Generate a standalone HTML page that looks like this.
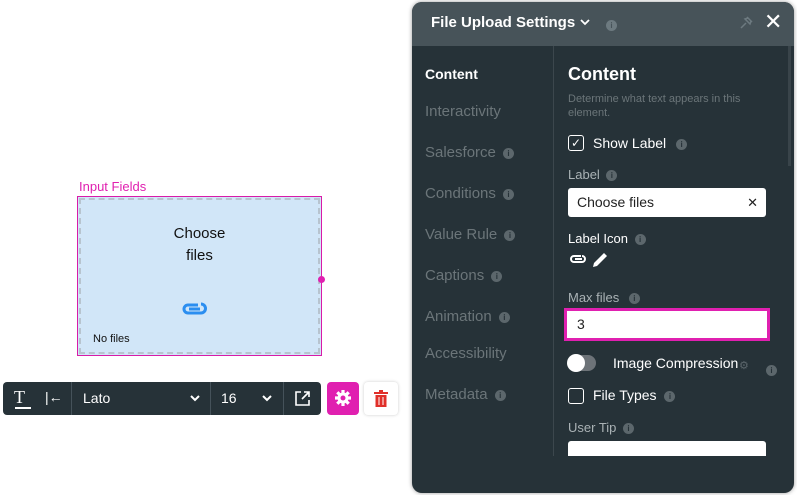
<!DOCTYPE html>
<html><head><meta charset="utf-8"><style>
*{box-sizing:border-box;margin:0;padding:0}
body{width:797px;height:495px;background:#fff;position:relative;overflow:hidden;font-family:"Liberation Sans",sans-serif}
.abs{position:absolute}
.info{display:inline-block;width:11px;height:11px;border-radius:50%;background:#5c676c;color:#263238;font-size:8px;line-height:11px;text-align:center;font-weight:bold;vertical-align:middle;margin-left:3px}
.nav{position:absolute;left:425px;color:#6b7579;font-size:15px}
.lbl{position:absolute;left:568px;color:#aab2b5;font-size:13px}
</style></head><body>
<div class="abs" style="left:79px;top:179px;color:#e020b0;font-size:13px">Input Fields</div>
<div class="abs" style="left:77px;top:196px;width:245px;height:160px;border:1px solid #d81ba8;background:#d1e6f8">
  <div class="abs" style="left:1px;top:1px;right:1px;bottom:1px;border:2px dashed #b7c4cf"></div>
  <div class="abs" style="left:0;right:0;top:26px;text-align:center;font-size:15px;line-height:22px;color:#111">Choose<br>files</div>
  <svg class="abs" style="left:102px;top:102px" width="28" height="20" viewBox="0 0 28 20"><path d="M18 6H8a4 4 0 0 0 0 8h13a4.5 4.5 0 0 0 0-9" fill="none" stroke="#2b8ef0" stroke-width="3"/><path d="M20 10H9" stroke="#2b8ef0" stroke-width="3"/></svg>
  <div class="abs" style="left:15px;top:136px;font-size:11px;color:#111">No files</div>
</div>
<div class="abs" style="left:318px;top:276px;width:7px;height:7px;border-radius:50%;background:#e020b0"></div>
<div class="abs" style="left:3px;top:382px;width:318px;height:33px;background:#263238;border-radius:4px;color:#fff">
  <div class="abs" style="left:11px;top:5px;font-family:'Liberation Serif',serif;font-size:18px">T</div>
  <div class="abs" style="left:12px;top:25px;width:16px;height:2px;background:#fff"></div>
  <div class="abs" style="left:42px;top:7px;font-size:14px">|←</div>
  <div class="abs" style="left:68px;top:0;width:1px;height:33px;background:#45525a"></div>
  <div class="abs" style="left:80px;top:8px;font-size:14px">Lato</div>
  <svg class="abs" style="left:187px;top:13px" width="10" height="7" viewBox="0 0 10 7"><path d="M1 1l4 4 4-4" fill="none" stroke="#fff" stroke-width="2"/></svg>
  <div class="abs" style="left:207px;top:0;width:1px;height:33px;background:#45525a"></div>
  <div class="abs" style="left:218px;top:8px;font-size:14px">16</div>
  <svg class="abs" style="left:259px;top:13px" width="10" height="7" viewBox="0 0 10 7"><path d="M1 1l4 4 4-4" fill="none" stroke="#fff" stroke-width="2"/></svg>
  <div class="abs" style="left:280px;top:0;width:1px;height:33px;background:#45525a"></div>
  <svg class="abs" style="left:292px;top:9px" width="15" height="15" viewBox="0 0 15 15"><path d="M6 1H1v13h13V9M9 1h5v5M14 1L7 8" fill="none" stroke="#fff" stroke-width="1.6"/></svg>
</div>
<div class="abs" style="left:327px;top:382px;width:32px;height:33px;background:#e020b0;border-radius:4px"></div>
<svg class="abs" style="left:334px;top:389px" width="18" height="18" viewBox="0 0 18 18"><g stroke="#fff" stroke-width="3.2"><path d="M9 1v16M1 9h16M3.3 3.3l11.4 11.4M14.7 3.3L3.3 14.7"/></g><circle cx="9" cy="9" r="5.5" fill="#fff"/><circle cx="9" cy="9" r="2.5" fill="#e020b0"/></svg>
<div class="abs" style="left:364px;top:382px;width:34px;height:33px;background:#fff;border-radius:4px;box-shadow:0 0 3px #ccc"></div>
<svg class="abs" style="left:374px;top:390px" width="14" height="17" viewBox="0 0 14 17"><rect x="0" y="2" width="14" height="2" fill="#e0302a"/><rect x="5" y="0" width="4" height="2" fill="#e0302a"/><rect x="1.5" y="5" width="11" height="12" fill="#e0302a"/><path d="M5 7v8M9 7v8" stroke="#fff" stroke-width="1"/></svg>
<div class="abs" style="left:412px;top:2px;width:382px;height:491px;background:#263238;border-radius:10px;overflow:hidden;box-shadow:0 0 4px #999">
  <div class="abs" style="left:0;top:0;width:382px;height:44px;background:#475359"></div>
</div>
<div class="abs" style="left:431px;top:14px;color:#fff;font-size:15px;font-weight:bold">File Upload Settings</div>
<svg class="abs" style="left:580px;top:19px" width="10" height="7" viewBox="0 0 10 7"><path d="M1 1l4 4 4-4" fill="none" stroke="#fff" stroke-width="1.8"/></svg>
<div class="abs" style="left:603px;top:17px"><span class="info" style="background:#6d7a80;color:#475359">i</span></div>
<svg class="abs" style="left:740px;top:15px" width="14" height="14" viewBox="0 0 14 14"><path d="M1 13l5-5M5 4l5 5M7 2l5 5M8 3l-3 1 5 5 1-3" fill="none" stroke="#6d7a80" stroke-width="1.5"/></svg>
<div class="abs" style="left:764px;top:9px;color:#fff;font-size:22px">✕</div>
<div class="abs" style="left:553px;top:46px;width:1px;height:410px;background:#3c474d"></div>
<div class="abs" style="left:788px;top:46px;width:3px;height:120px;background:#39444a"></div>
<div class="nav" style="top:66px;color:#fff;font-weight:bold;font-size:14px">Content</div>
<div class="nav" style="top:103px">Interactivity</div>
<div class="nav" style="top:144px">Salesforce <span class="info">i</span></div>
<div class="nav" style="top:185px">Conditions <span class="info">i</span></div>
<div class="nav" style="top:226px">Value Rule <span class="info">i</span></div>
<div class="nav" style="top:267px">Captions <span class="info">i</span></div>
<div class="nav" style="top:308px">Animation <span class="info">i</span></div>
<div class="nav" style="top:345px">Accessibility</div>
<div class="nav" style="top:386px">Metadata <span class="info">i</span></div>
<div class="abs" style="left:568px;top:64px;color:#fff;font-size:18px;font-weight:bold">Content</div>
<div class="abs" style="left:568px;top:92px;color:#6b7579;font-size:11px;line-height:14px;width:200px">Determine what text appears in this element.</div>
<div class="abs" style="left:568px;top:135px;width:16px;height:16px;border:1px solid #fff;border-radius:3px;color:#fff;font-size:12px;line-height:14px;text-align:center">✓</div>
<div class="abs" style="left:593px;top:135px;color:#fff;font-size:14px">Show Label <span class="info" style="margin-left:6px">i</span></div>
<div class="lbl" style="top:167px">Label <span class="info">i</span></div>
<div class="abs" style="left:568px;top:188px;width:198px;height:29px;background:#fff;border-radius:3px;font-size:14px;line-height:29px;padding-left:9px;color:#222">Choose files<span style="position:absolute;right:8px;font-size:13px">✕</span></div>
<div class="abs" style="left:568px;top:231px;color:#fff;font-size:13px">Label Icon <span class="info">i</span></div>
<svg class="abs" style="left:569px;top:253px" width="18" height="12" viewBox="0 0 18 12"><path d="M12 3H5a3 3 0 0 0 0 6h8a3 3 0 0 0 0-6" fill="none" stroke="#fff" stroke-width="2"/><path d="M13 6H6" stroke="#fff" stroke-width="2"/></svg>
<svg class="abs" style="left:592px;top:251px" width="17" height="17" viewBox="0 0 17 17"><path d="M1 16l1-4L12 2l3 3L5 15z" fill="#fff"/></svg>
<div class="lbl" style="top:290px">Max files <span class="info" style="margin-left:6px">i</span></div>
<div class="abs" style="left:564px;top:308px;width:206px;height:33px;border:3px solid #e020b0;background:#fff;font-size:14px;line-height:27px;padding-left:10px;color:#222">3</div>
<div class="abs" style="left:568px;top:355px;width:28px;height:16px;border-radius:8px;background:#6d7378"></div>
<div class="abs" style="left:567px;top:354px;width:18px;height:18px;border-radius:50%;background:#fff"></div>
<div class="abs" style="left:613px;top:355px;color:#fff;font-size:14px">Image Compression</div>
<div class="abs" style="left:739px;top:359px;color:#5c676c;font-size:11px">⚙</div>
<div class="abs" style="left:763px;top:362px"><span class="info">i</span></div>
<div class="abs" style="left:568px;top:388px;width:16px;height:16px;border:1px solid #fff;border-radius:3px"></div>
<div class="abs" style="left:593px;top:387px;color:#fff;font-size:14px">File Types <span class="info" style="margin-left:4px">i</span></div>
<div class="lbl" style="top:420px">User Tip <span class="info">i</span></div>
<div class="abs" style="left:568px;top:441px;width:198px;height:15px;background:#fff;border-radius:3px 3px 0 0"></div>
</body></html>
